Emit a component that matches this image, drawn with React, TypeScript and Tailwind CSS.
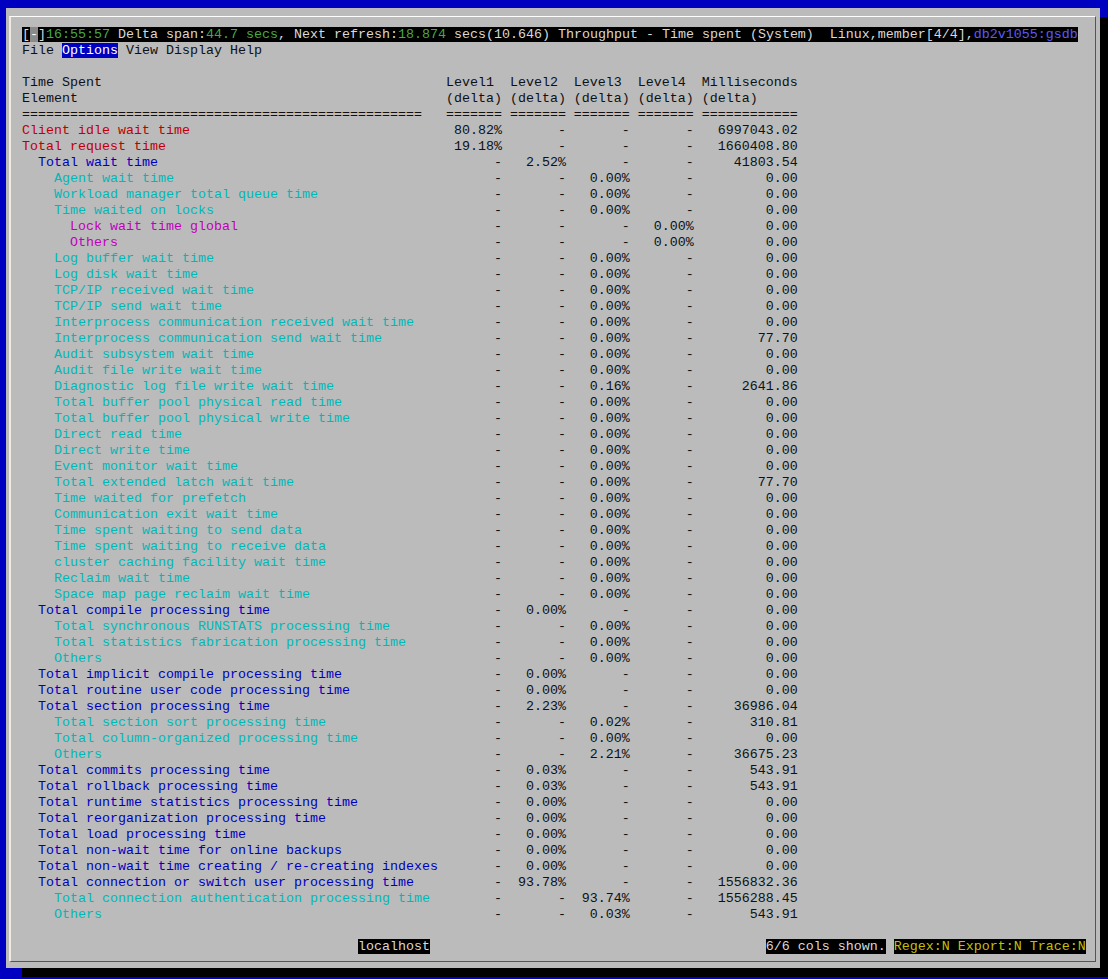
import React from 'react'

interface Row {
  level: number
  name: string
  l1: string
  l2: string
  l3: string
  l4: string
  ms: string
}

const rows: Row[] = [
  { level: 0, name: 'Client idle wait time', l1: '80.82%', l2: '-', l3: '-', l4: '-', ms: '6997043.02' },
  { level: 0, name: 'Total request time', l1: '19.18%', l2: '-', l3: '-', l4: '-', ms: '1660408.80' },
  { level: 1, name: 'Total wait time', l1: '-', l2: '2.52%', l3: '-', l4: '-', ms: '41803.54' },
  { level: 2, name: 'Agent wait time', l1: '-', l2: '-', l3: '0.00%', l4: '-', ms: '0.00' },
  { level: 2, name: 'Workload manager total queue time', l1: '-', l2: '-', l3: '0.00%', l4: '-', ms: '0.00' },
  { level: 2, name: 'Time waited on locks', l1: '-', l2: '-', l3: '0.00%', l4: '-', ms: '0.00' },
  { level: 3, name: 'Lock wait time global', l1: '-', l2: '-', l3: '-', l4: '0.00%', ms: '0.00' },
  { level: 3, name: 'Others', l1: '-', l2: '-', l3: '-', l4: '0.00%', ms: '0.00' },
  { level: 2, name: 'Log buffer wait time', l1: '-', l2: '-', l3: '0.00%', l4: '-', ms: '0.00' },
  { level: 2, name: 'Log disk wait time', l1: '-', l2: '-', l3: '0.00%', l4: '-', ms: '0.00' },
  { level: 2, name: 'TCP/IP received wait time', l1: '-', l2: '-', l3: '0.00%', l4: '-', ms: '0.00' },
  { level: 2, name: 'TCP/IP send wait time', l1: '-', l2: '-', l3: '0.00%', l4: '-', ms: '0.00' },
  { level: 2, name: 'Interprocess communication received wait time', l1: '-', l2: '-', l3: '0.00%', l4: '-', ms: '0.00' },
  { level: 2, name: 'Interprocess communication send wait time', l1: '-', l2: '-', l3: '0.00%', l4: '-', ms: '77.70' },
  { level: 2, name: 'Audit subsystem wait time', l1: '-', l2: '-', l3: '0.00%', l4: '-', ms: '0.00' },
  { level: 2, name: 'Audit file write wait time', l1: '-', l2: '-', l3: '0.00%', l4: '-', ms: '0.00' },
  { level: 2, name: 'Diagnostic log file write wait time', l1: '-', l2: '-', l3: '0.16%', l4: '-', ms: '2641.86' },
  { level: 2, name: 'Total buffer pool physical read time', l1: '-', l2: '-', l3: '0.00%', l4: '-', ms: '0.00' },
  { level: 2, name: 'Total buffer pool physical write time', l1: '-', l2: '-', l3: '0.00%', l4: '-', ms: '0.00' },
  { level: 2, name: 'Direct read time', l1: '-', l2: '-', l3: '0.00%', l4: '-', ms: '0.00' },
  { level: 2, name: 'Direct write time', l1: '-', l2: '-', l3: '0.00%', l4: '-', ms: '0.00' },
  { level: 2, name: 'Event monitor wait time', l1: '-', l2: '-', l3: '0.00%', l4: '-', ms: '0.00' },
  { level: 2, name: 'Total extended latch wait time', l1: '-', l2: '-', l3: '0.00%', l4: '-', ms: '77.70' },
  { level: 2, name: 'Time waited for prefetch', l1: '-', l2: '-', l3: '0.00%', l4: '-', ms: '0.00' },
  { level: 2, name: 'Communication exit wait time', l1: '-', l2: '-', l3: '0.00%', l4: '-', ms: '0.00' },
  { level: 2, name: 'Time spent waiting to send data', l1: '-', l2: '-', l3: '0.00%', l4: '-', ms: '0.00' },
  { level: 2, name: 'Time spent waiting to receive data', l1: '-', l2: '-', l3: '0.00%', l4: '-', ms: '0.00' },
  { level: 2, name: 'cluster caching facility wait time', l1: '-', l2: '-', l3: '0.00%', l4: '-', ms: '0.00' },
  { level: 2, name: 'Reclaim wait time', l1: '-', l2: '-', l3: '0.00%', l4: '-', ms: '0.00' },
  { level: 2, name: 'Space map page reclaim wait time', l1: '-', l2: '-', l3: '0.00%', l4: '-', ms: '0.00' },
  { level: 1, name: 'Total compile processing time', l1: '-', l2: '0.00%', l3: '-', l4: '-', ms: '0.00' },
  { level: 2, name: 'Total synchronous RUNSTATS processing time', l1: '-', l2: '-', l3: '0.00%', l4: '-', ms: '0.00' },
  { level: 2, name: 'Total statistics fabrication processing time', l1: '-', l2: '-', l3: '0.00%', l4: '-', ms: '0.00' },
  { level: 2, name: 'Others', l1: '-', l2: '-', l3: '0.00%', l4: '-', ms: '0.00' },
  { level: 1, name: 'Total implicit compile processing time', l1: '-', l2: '0.00%', l3: '-', l4: '-', ms: '0.00' },
  { level: 1, name: 'Total routine user code processing time', l1: '-', l2: '0.00%', l3: '-', l4: '-', ms: '0.00' },
  { level: 1, name: 'Total section processing time', l1: '-', l2: '2.23%', l3: '-', l4: '-', ms: '36986.04' },
  { level: 2, name: 'Total section sort processing time', l1: '-', l2: '-', l3: '0.02%', l4: '-', ms: '310.81' },
  { level: 2, name: 'Total column-organized processing time', l1: '-', l2: '-', l3: '0.00%', l4: '-', ms: '0.00' },
  { level: 2, name: 'Others', l1: '-', l2: '-', l3: '2.21%', l4: '-', ms: '36675.23' },
  { level: 1, name: 'Total commits processing time', l1: '-', l2: '0.03%', l3: '-', l4: '-', ms: '543.91' },
  { level: 1, name: 'Total rollback processing time', l1: '-', l2: '0.03%', l3: '-', l4: '-', ms: '543.91' },
  { level: 1, name: 'Total runtime statistics processing time', l1: '-', l2: '0.00%', l3: '-', l4: '-', ms: '0.00' },
  { level: 1, name: 'Total reorganization processing time', l1: '-', l2: '0.00%', l3: '-', l4: '-', ms: '0.00' },
  { level: 1, name: 'Total load processing time', l1: '-', l2: '0.00%', l3: '-', l4: '-', ms: '0.00' },
  { level: 1, name: 'Total non-wait time for online backups', l1: '-', l2: '0.00%', l3: '-', l4: '-', ms: '0.00' },
  { level: 1, name: 'Total non-wait time creating / re-creating indexes', l1: '-', l2: '0.00%', l3: '-', l4: '-', ms: '0.00' },
  { level: 1, name: 'Total connection or switch user processing time', l1: '-', l2: '93.78%', l3: '-', l4: '-', ms: '1556832.36' },
  { level: 2, name: 'Total connection authentication processing time', l1: '-', l2: '-', l3: '93.74%', l4: '-', ms: '1556288.45' },
  { level: 2, name: 'Others', l1: '-', l2: '-', l3: '0.03%', l4: '-', ms: '543.91' },
]

// level -> text colour of the element name
const levelColor = ['text-[#c00000]', 'text-[#0000c0]', 'text-[#00b8b8]', 'text-[#c000c0]']

const line = 'h-[16px] leading-[16px] whitespace-pre'

function numbers(r: Row) {
  return ' ' + [r.l1, r.l2, r.l3, r.l4].map(v => v.padStart(7)).join(' ') + ' ' + r.ms.padStart(12)
}

export default function App() {
  return (
    <div className="w-[1108px] h-[979px] overflow-hidden bg-[#0000c0] pl-[6px] pt-[8px]">
      {/* console window */}
      <div className="w-[1094px] h-[960px] bg-[#bbbbbb] shadow-[16px_9px_0_0_#000] pt-[8px] pl-[3px]">
        <div
          className="w-[1087px] h-[946px] border-t border-l-2 border-r border-b border-t-white border-l-[#f2eadf] border-r-[#555555] border-b-[#555555] pl-[11px] pt-[10px] text-[13.333px] text-[#101010]"
          style={{ fontFamily: '"Liberation Mono", "DejaVu Sans Mono", monospace' }}
        >
          {/* title bar */}
          <div className={line}>
            <span className="bg-black text-[#d8d8d8]">
              [<span className="bg-[#8a8a8a] text-white">-</span>]
              <span className="text-[#46a846]">16:55:57</span>
              {' Delta span:'}
              <span className="text-[#46a846]">44.7 secs</span>
              {', Next refresh:'}
              <span className="text-[#46a846]">18.874</span>
              {' secs(10.646) Throughput - Time spent (System)  Linux,member[4/4],'}
              <span className="text-[#5a5aff]">db2v1055:gsdb</span>
            </span>
          </div>

          {/* menu */}
          <div className={line}>
            {'File '}
            <span className="bg-[#0000c0] text-white">Options</span>
            {' View Display Help'}
          </div>
          <div className={line}> </div>

          {/* column headers */}
          <div className={line}>{'Time Spent'.padEnd(53) + 'Level1  Level2  Level3  Level4  Milliseconds'}</div>
          <div className={line}>{'Element'.padEnd(53) + '(delta) (delta) (delta) (delta) (delta)'}</div>
          <div className={line}>{'='.repeat(50) + '   ' + '======= ======= ======= ======= ============'}</div>

          {rows.map((r, idx) => (
            <div key={idx} className={line}>
              <span className={levelColor[r.level]}>{(' '.repeat(r.level * 2) + r.name).padEnd(52)}</span>
              <span>{numbers(r)}</span>
            </div>
          ))}

          <div className={line}> </div>

          {/* status line */}
          <div className={line}>
            {' '.repeat(42)}
            <span className="bg-black text-[#d8d8d8]">localhost</span>
            {' '.repeat(42)}
            <span className="bg-black text-[#d8d8d8]">6/6 cols shown.</span>
            {' '}
            <span className="bg-black text-[#c0c000]">Regex:N Export:N Trace:N</span>
          </div>
        </div>
      </div>
    </div>
  )
}
